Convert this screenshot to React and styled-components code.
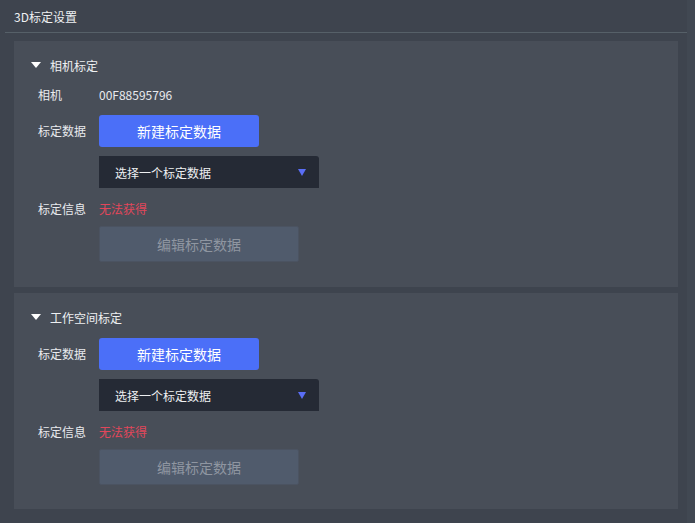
import styled, { createGlobalStyle } from 'styled-components';

const GlobalStyle = createGlobalStyle`
  html, body {
    margin: 0;
    padding: 0;
    background: #3e444e;
  }
  body {
    font-family: "Noto Sans CJK SC", "Noto Sans", sans-serif;
    font-size: 12px;
    color: #e4e7eb;
  }
`;

const Page = styled.div`
  display: flex;
  width: 695px;
  height: 523px;
  background: #3e444e;
  overflow: hidden;
`;

const Main = styled.div`
  flex: 1;
  display: flex;
  flex-direction: column;
`;

const Scrollbar = styled.div`
  width: 8px;
  background: #414852;
`;

const TitleBar = styled.div`
  height: 32px;
  margin-left: 5px;
  padding-left: 9px;
  display: flex;
  align-items: center;
  border-bottom: 1px solid #566068;
  font-size: 12px;
  color: #eef0f2;
`;

const Panels = styled.div`
  display: flex;
  flex-direction: column;
  gap: 6px;
  padding: 8px 9px 0 14px;
`;

const Panel = styled.section`
  background: #484e58;
  padding: 16px 24px ${p => p.$bottom}px;
  display: flex;
  flex-direction: column;
`;

const Header = styled.div`
  height: 16px;
  display: flex;
  align-items: center;
  gap: 9px;
  margin-left: -7px;
  font-size: 12px;
  color: #eef0f2;
`;

const Row = styled.div`
  display: flex;
  align-items: ${p => (p.$center ? 'center' : 'flex-start')};
  margin-top: ${p => p.$mt}px;
  min-height: 16px;
`;

const Label = styled.div`
  width: 61px;
  flex: none;
  line-height: 16px;
  color: #e8eaee;
`;

const Value = styled.div`
  line-height: 16px;
  color: ${p => (p.$error ? '#e2475b' : '#e8eaee')};
`;

const PrimaryButton = styled.button`
  width: 160px;
  height: 32px;
  border: none;
  border-radius: 3px;
  background: #4b6ff8;
  color: #ffffff;
  font-family: inherit;
  font-size: 14px;
  padding: 0;
`;

const Select = styled.div`
  width: 220px;
  height: 32px;
  box-sizing: border-box;
  padding: 0 13px 0 16px;
  display: flex;
  align-items: center;
  justify-content: space-between;
  background: #252a35;
  border-radius: 0 3px 0 0;
  color: #eef0f2;
  font-size: 12px;
`;

const DisabledButton = styled.button`
  width: 200px;
  height: 36px;
  box-sizing: border-box;
  border: 1px solid #4b5361;
  border-radius: 2px;
  background: #505b6c;
  color: #8f96a1;
  font-family: inherit;
  font-size: 14px;
  padding: 0;
`;

const Indent = styled.div`
  padding-left: 61px;
  margin-top: ${p => p.$mt}px;
`;

const HeaderArrow = () => (
  <svg width="10" height="6" viewBox="0 0 10 6">
    <path d="M0 0 L10 0 L5 6 Z" fill="#ffffff" />
  </svg>
);

const SelectArrow = () => (
  <svg width="8" height="7" viewBox="0 0 8 7">
    <path d="M0 0 L8 0 L4 7 Z" fill="#5a6ef6" />
  </svg>
);

function CalibrationPanel({ title, camera, bottom, firstGap }) {
  return (
    <Panel $bottom={bottom}>
      <Header>
        <HeaderArrow />
        <span>{title}</span>
      </Header>
      {camera && (
        <Row $mt={14} $center>
          <Label>相机</Label>
          <Value>{camera}</Value>
        </Row>
      )}
      <Row $mt={camera ? 12 : firstGap} $center>
        <Label>标定数据</Label>
        <PrimaryButton>新建标定数据</PrimaryButton>
      </Row>
      <Indent $mt={9}>
        <Select>
          <span>选择一个标定数据</span>
          <SelectArrow />
        </Select>
      </Indent>
      <Row $mt={13} $center>
        <Label>标定信息</Label>
        <Value $error>无法获得</Value>
      </Row>
      <Indent $mt={9}>
        <DisabledButton>编辑标定数据</DisabledButton>
      </Indent>
    </Panel>
  );
}

export default function App() {
  return (
    <Page>
      <GlobalStyle />
      <Main>
        <TitleBar>3D标定设置</TitleBar>
        <Panels>
          <CalibrationPanel title="相机标定" camera="00F88595796" bottom={25} />
          <CalibrationPanel title="工作空间标定" bottom={24} firstGap={13} />
        </Panels>
      </Main>
      <Scrollbar />
    </Page>
  );
}
